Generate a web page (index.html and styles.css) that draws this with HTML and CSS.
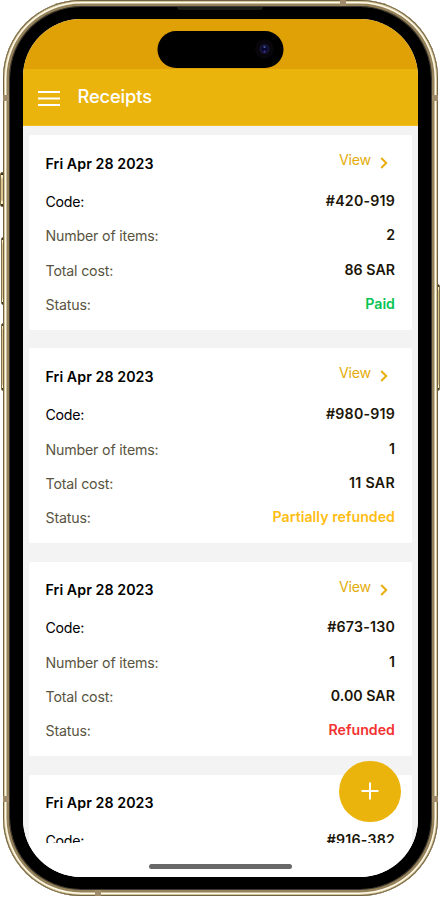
FILE: index.html
```
<!DOCTYPE html>
<html lang="en">
<head>
<meta charset="utf-8">
<title>Receipts</title>
<link rel="stylesheet" href="styles.css">
</head>
<body>
<main class="stage">
  <i class="key mute"></i><i class="key up"></i><i class="key down"></i><i class="key power"></i>
  <div class="phone">
    <i class="band band-top"></i><i class="band band-bottom"></i>
    <i class="band side left upper"></i><i class="band side right upper"></i>
    <i class="band side left lower"></i><i class="band side right lower"></i>
    <div class="bezel">
      <i class="speaker"></i>
      <div class="screen">
        <div class="statusbar"><div class="island"><svg class="lens" viewBox="0 0 20 20"><circle cx="10" cy="10" r="9.5" fill="#08050b"/><circle cx="10" cy="10" r="5" fill="#151538"/><circle cx="10" cy="10" r="3" fill="#08082c"/><circle cx="10" cy="8" r="1.1" fill="#4c5fa0"/><circle cx="10" cy="12.5" r="1.1" fill="#45319a"/></svg></div></div>
        <header class="appbar">
          <svg class="menu" viewBox="0 0 22 16"><path d="M0 2h22M0 8.5h22M0 15h22" stroke="#fff" stroke-width="2"/></svg>
          <h1>Receipts</h1>
        </header>
        <section class="list">
          <article class="card">
            <div class="head"><h2>Fri Apr 28 2023</h2><a class="view"><span>View</span><svg viewBox="0 0 8 12"><path d="M1.2 1l5 5-5 5"/></svg></a></div>
            <div class="row code"><span>Code:</span><b>#420-919</b></div>
            <div class="row"><span>Number of items:</span><b>2</b></div>
            <div class="row"><span>Total cost:</span><b>86 SAR</b></div>
            <div class="row"><span>Status:</span><b class="paid">Paid</b></div>
          </article>
          <article class="card">
            <div class="head"><h2>Fri Apr 28 2023</h2><a class="view"><span>View</span><svg viewBox="0 0 8 12"><path d="M1.2 1l5 5-5 5"/></svg></a></div>
            <div class="row code"><span>Code:</span><b>#980-919</b></div>
            <div class="row"><span>Number of items:</span><b>1</b></div>
            <div class="row"><span>Total cost:</span><b class="wide">11 SAR</b></div>
            <div class="row"><span>Status:</span><b class="partial">Partially refunded</b></div>
          </article>
          <article class="card">
            <div class="head"><h2>Fri Apr 28 2023</h2><a class="view"><span>View</span><svg viewBox="0 0 8 12"><path d="M1.2 1l5 5-5 5"/></svg></a></div>
            <div class="row code"><span>Code:</span><b>#673-130</b></div>
            <div class="row"><span>Number of items:</span><b>1</b></div>
            <div class="row"><span>Total cost:</span><b>0.00 SAR</b></div>
            <div class="row"><span>Status:</span><b class="refunded">Refunded</b></div>
          </article>
          <article class="card">
            <div class="head"><h2>Fri Apr 28 2023</h2></div>
            <div class="row code"><span>Code:</span><b>#916-382</b></div>
          </article>
        </section>
        <footer class="home"><i></i></footer>
        <button class="fab" aria-label="Add receipt"><svg viewBox="0 0 18 18"><path d="M9 .5v17M.5 9h17" stroke="#fff" stroke-width="2"/></svg></button>
      </div>
    </div>
  </div>
</main>
</body>
</html>
```
FILE: styles.css
```
* { box-sizing: border-box; }
body { margin: 0; background: #fff; font-family: Inter, sans-serif; }
.stage { position: relative; width: 442px; height: 897px; overflow: hidden; }

.phone {
  position: relative;
  width: 435px;
  height: 896px;
  margin-left: 3px;
  padding: 7px;
  border-radius: 78px;
  background: #96825a;
  box-shadow: inset 0 0 0 1px #6e6247, inset 0 0 0 2px #d8c697, inset 0 0 0 3.5px #fffbea, inset 0 0 0 6px #96825a, inset 0 0 0 7px #3b372f;
}
.bezel { position: relative; height: 882px; padding: 12px 13px; border-radius: 71px; background: #000; }
.screen {
  position: relative;
  display: flex;
  flex-direction: column;
  height: 858px;
  border-radius: 58px;
  overflow: hidden;
  background: #fff;
}
.band { position: absolute; background: #a08b6b; }
.band-top { left: 337px; top: 0; width: 6px; height: 6px; }
.band-bottom { left: 92px; bottom: 0; width: 6px; height: 6px; }
.side { width: 6px; height: 6px; }
.left { left: 0; }
.right { right: 0; }
.upper { top: 95px; }
.lower { top: 796px; }
.speaker { position: absolute; left: 167px; top: 0; width: 86px; height: 3px; background: #1b1d19; border-radius: 0 0 3px 3px; }

.key { position: absolute; border: 1px solid #80704a; background: linear-gradient(#3c3215 0 2px, #fff3cf 2px 4px, #dcc48f 6px calc(100% - 6px), #fff3cf calc(100% - 4px) calc(100% - 2px), #3c3215 0); }
.mute { left: 0; top: 172px; width: 5px; height: 35px; border-radius: 2px 0 0 2px; }
.up { left: 1px; top: 237px; width: 4px; height: 68px; border-radius: 2px 0 0 2px; }
.down { left: 1px; top: 323px; width: 4px; height: 68px; border-radius: 2px 0 0 2px; }
.power { left: 436px; top: 284px; width: 4px; height: 107px; border-radius: 0 2px 2px 0; }

.statusbar { flex: none; height: 50px; padding-top: 11.5px; background: #e0a106; }
.island { display: flex; align-items: center; justify-content: flex-end; width: 126px; height: 37px; margin: 0 auto; padding-right: 8.5px; border-radius: 19px; background: #000; transform: translateX(-.5px); }
.lens { width: 20px; height: 20px; }
.appbar { display: flex; align-items: center; flex: none; height: 57px; padding: 0 14.5px; background: #eab40c; border-bottom: 1px solid #f3bd22; }
.menu { width: 22px; height: 16px; margin-top: 1px; }
h1 { margin: 0 0 3px 18px; color: #fff; font-size: 18.3px; line-height: 24px; font-weight: 500; letter-spacing: -.13px; }

.list { flex: none; height: 717px; padding: 9px 6px 0; overflow: hidden; background: #f3f3f3; }
.card { height: 194.6px; margin-bottom: 18.7px; padding: 0 17px 0 16.5px; border-radius: 2px; background: #fff; font-size: 14.2px; line-height: 20px; }
.head { display: flex; align-items: flex-start; justify-content: space-between; height: 49.5px; padding: 15px 7px 0 0; }
h2 { margin: 3.5px 0 0; color: #000; font-size: 14.2px; line-height: 20px; font-weight: 600; letter-spacing: .07px; }
.view { display: flex; align-items: flex-start; color: #e3ac0a; letter-spacing: -.2px; }
.view svg { width: 8px; height: 12px; margin: 7px 0 0 9px; fill: none; stroke: #e8ae10; stroke-width: 2; }
.row { display: flex; justify-content: space-between; height: 34.3px; padding-top: 7.5px; color: #59543f; letter-spacing: -.17px; }
.row b { margin-top: -1px; color: #1b1608; font-weight: 600; letter-spacing: .02px; }
.row.code { padding-top: 7px; }
.row.code b { letter-spacing: .2px; }
.row b.wide { letter-spacing: .3px; }
.code span { color: #000; letter-spacing: -.3px; }
.row .paid { color: #06c452; }
.row .partial { color: #ffbd14; }
.row .refunded { color: #f23131; }

.home { flex: 1; display: flex; align-items: flex-start; justify-content: center; padding-top: 21px; background: #fff; }
.home i { width: 143px; height: 5px; border-radius: 3px; background: #686868; }
.fab { position: absolute; left: 316.3px; top: 741.8px; width: 61.4px; height: 61.4px; padding: 0; display: flex; align-items: center; justify-content: center; border: 0; border-radius: 50%; background: #eab40c; }
.fab svg { width: 18px; height: 18px; }
```
